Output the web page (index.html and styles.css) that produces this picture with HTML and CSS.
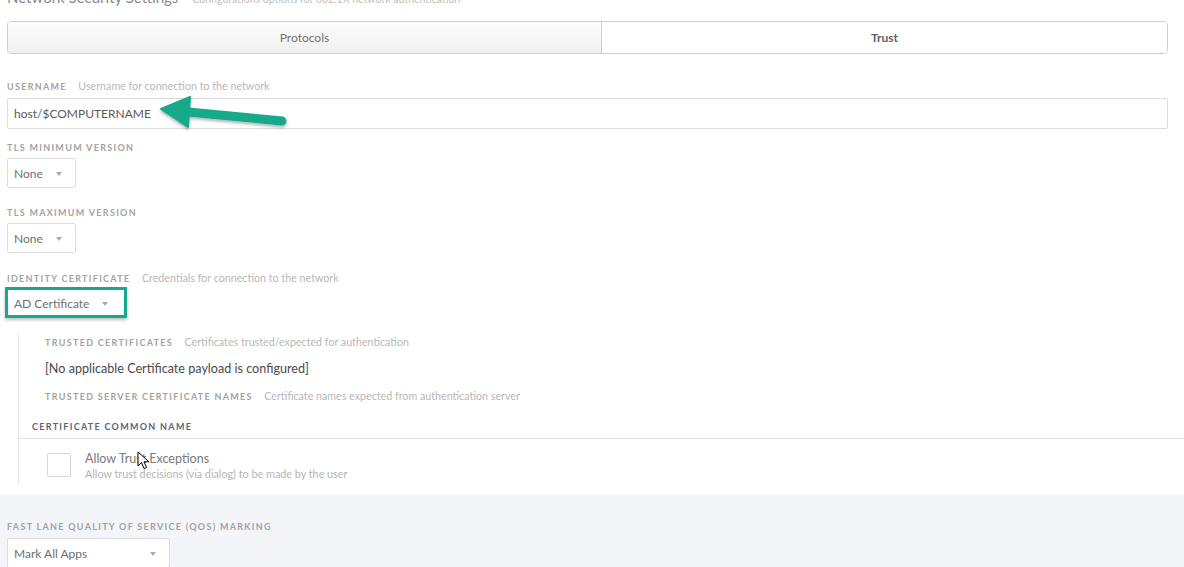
FILE: index.html
```html
<!DOCTYPE html>
<html lang="en">

<head>
    <meta charset="UTF-8">
    <meta name="viewport" content="width=device-width, initial-scale=1.0">
    <title>Network Security Settings</title>
    <link rel="stylesheet" href="styles.css">
</head>

<body>
    <div class="panel">
        <div class="head">
            <span class="title">Network Security Settings</span>
            <span class="subtitle">Configurations options for 802.1X network authentication</span>
        </div>

        <div class="tabs">
            <div class="tab first">Protocols</div>
            <div class="tab active">Trust</div>
        </div>

        <div class="field field-input">
            <div class="label">USERNAME <span class="desc">Username for connection to the network</span></div>
            <div class="input">host/$COMPUTERNAME</div>
            <svg class="green-arrow" width="145" height="45" viewBox="0 0 145 45">
                <defs>
                    <filter id="sh" x="-20%" y="-20%" width="140%" height="160%">
                        <feDropShadow dx="0" dy="2" stdDeviation="1.5" flood-color="#000" flood-opacity="0.3" />
                    </filter>
                </defs>
                <g filter="url(#sh)" fill="#13a98a" stroke="#13a98a">
                    <line x1="38" y1="20" x2="132" y2="29" stroke-width="9" stroke-linecap="round" />
                    <polygon points="11,17 40,5 38,35" stroke-width="2" stroke-linejoin="round" />
                </g>
            </svg>
        </div>

        <div class="field">
            <div class="label">TLS MINIMUM VERSION</div>
            <div class="select">None <span class="caret"></span></div>
        </div>

        <div class="field">
            <div class="label">TLS MAXIMUM VERSION</div>
            <div class="select">None <span class="caret"></span></div>
        </div>

        <div class="field">
            <div class="label">IDENTITY CERTIFICATE <span class="desc">Credentials for connection to the network</span></div>
            <div class="select highlight">AD Certificate <span class="caret"></span></div>
        </div>

        <div class="nested">
            <div class="sub">
                <div class="label">TRUSTED CERTIFICATES <span class="desc">Certificates trusted/expected for authentication</span></div>
                <div class="note">[No applicable Certificate payload is configured]</div>
                <div class="label">TRUSTED SERVER CERTIFICATE NAMES <span class="desc">Certificate names expected from authentication server</span></div>
            </div>
            <div class="common">CERTIFICATE COMMON NAME</div>
            <div class="check-row">
                <div class="checkbox"></div>
                <div>
                    <div class="check-title">Allow Trust Exceptions</div>
                    <div class="check-desc">Allow trust decisions (via dialog) to be made by the user</div>
                </div>
                <svg class="cursor" width="14" height="20" viewBox="0 0 14 20">
                    <path d="M1 1 L1 15 L4.5 11.5 L7 17.5 L9.5 16.5 L7 10.8 L12 10.8 Z" fill="#fff" stroke="#000" stroke-width="1" stroke-linejoin="round" />
                </svg>
            </div>
        </div>
    </div>

    <div class="grey">
        <div class="label">FAST LANE QUALITY OF SERVICE (QOS) MARKING</div>
        <div class="select wide">Mark All Apps <span class="caret"></span></div>
    </div>
</body>

</html>
```

FILE: styles.css
```css
* {
    margin: 0;
    padding: 0;
    box-sizing: border-box;
}

body {
    font-family: Lato, "Open Sans", sans-serif;
    background-color: #fff;
    color: #666;
    overflow: hidden;
}

.panel {
    padding: 0 16px 10px 7px;
}

.head {
    margin-top: -13px;
    height: 20px;
    line-height: 20px;
    white-space: nowrap;
}

.title {
    font-size: 15px;
    color: #8a8a8a;
}

.subtitle {
    font-size: 10.5px;
    color: #c0c0c0;
    margin-left: 10px;
}

.tabs {
    display: flex;
    margin-top: 14px;
    height: 33px;
    border: 1px solid #cfcfcf;
    border-radius: 4px;
    overflow: hidden;
}

.tab {
    flex: 1;
    display: flex;
    justify-content: center;
    align-items: center;
    font-size: 12px;
    color: #707070;
    background: linear-gradient(#fdfdfd, #f0f0f0);
}

.tab.first {
    flex: 0 0 593px;
}

.tab.active {
    background: #fff;
    border-left: 1px solid #cfcfcf;
    font-weight: bold;
    color: #5d6373;
}

.label {
    font-size: 9px;
    font-weight: bold;
    letter-spacing: 1.3px;
    color: #a3a3a3;
    line-height: 12px;
    white-space: nowrap;
}

.desc {
    font-size: 10.7px;
    font-weight: normal;
    letter-spacing: 0;
    color: #b8b8b8;
    margin-left: 8px;
}

.field {
    margin-top: 19px;
}

.field .label {
    margin-bottom: 4px;
}

.field-input {
    margin-top: 26px;
    position: relative;
}

.field-input .label {
    margin-bottom: 5px;
}

.field-input + .field {
    margin-top: 13px;
}

.input {
    height: 31px;
    border: 1px solid #ddd;
    border-radius: 2px;
    padding-left: 6px;
    display: flex;
    align-items: center;
    font-size: 12px;
    color: #5a5a5a;
}

.green-arrow {
    position: absolute;
    left: 143px;
    top: 12px;
}

.select {
    display: inline-flex;
    align-items: center;
    height: 30px;
    border: 1px solid #ddd;
    border-radius: 2px;
    padding: 0 13px 0 6px;
    font-size: 12px;
    color: #707070;
    background-color: #fff;
}

.caret {
    width: 0;
    height: 0;
    margin-left: 13px;
    margin-top: 2px;
    border-left: 3.5px solid transparent;
    border-right: 3.5px solid transparent;
    border-top: 4px solid #aaa;
}

.highlight {
    position: relative;
    width: 118px;
    margin-top: -1px;
}

.highlight::after {
    content: "";
    position: absolute;
    left: -3px;
    right: -3px;
    top: -2px;
    bottom: -1px;
    border: 3px solid #17a98b;
    box-shadow: 0 2px 3px rgba(0, 0, 0, 0.25);
}

.nested {
    margin: 15px -16px 0 11px;
    border-left: 1px solid #e6e6e6;
}

.sub {
    padding: 3px 0 0 26px;
}

.note {
    font-size: 12.6px;
    color: #4a4a4a;
    margin: 12px 0 14px;
}

.common {
    font-size: 9px;
    font-weight: bold;
    letter-spacing: 1.3px;
    color: #5d6478;
    line-height: 12px;
    padding: 18px 0 5px 13px;
    border-bottom: 1px solid #e3e3e3;
}

.check-row {
    display: flex;
    position: relative;
    padding: 14px 0 3px 28px;
}

.checkbox {
    width: 24px;
    height: 24px;
    border: 1px solid #d6d6d6;
    border-radius: 2px;
    margin-right: 14px;
}

.check-title {
    font-size: 12.5px;
    color: #7a7a7a;
    line-height: 14px;
    margin-top: -1px;
}

.check-desc {
    font-size: 10.8px;
    color: #b5b5b5;
    line-height: 14px;
    margin-top: 1px;
}

.cursor {
    position: absolute;
    left: 118px;
    top: 12px;
}

.grey {
    background-color: #f4f5f8;
    padding: 27px 16px 20px 7px;
}

.grey .label {
    margin-bottom: 5px;
}

.wide {
    width: 163px;
    justify-content: space-between;
}
```
